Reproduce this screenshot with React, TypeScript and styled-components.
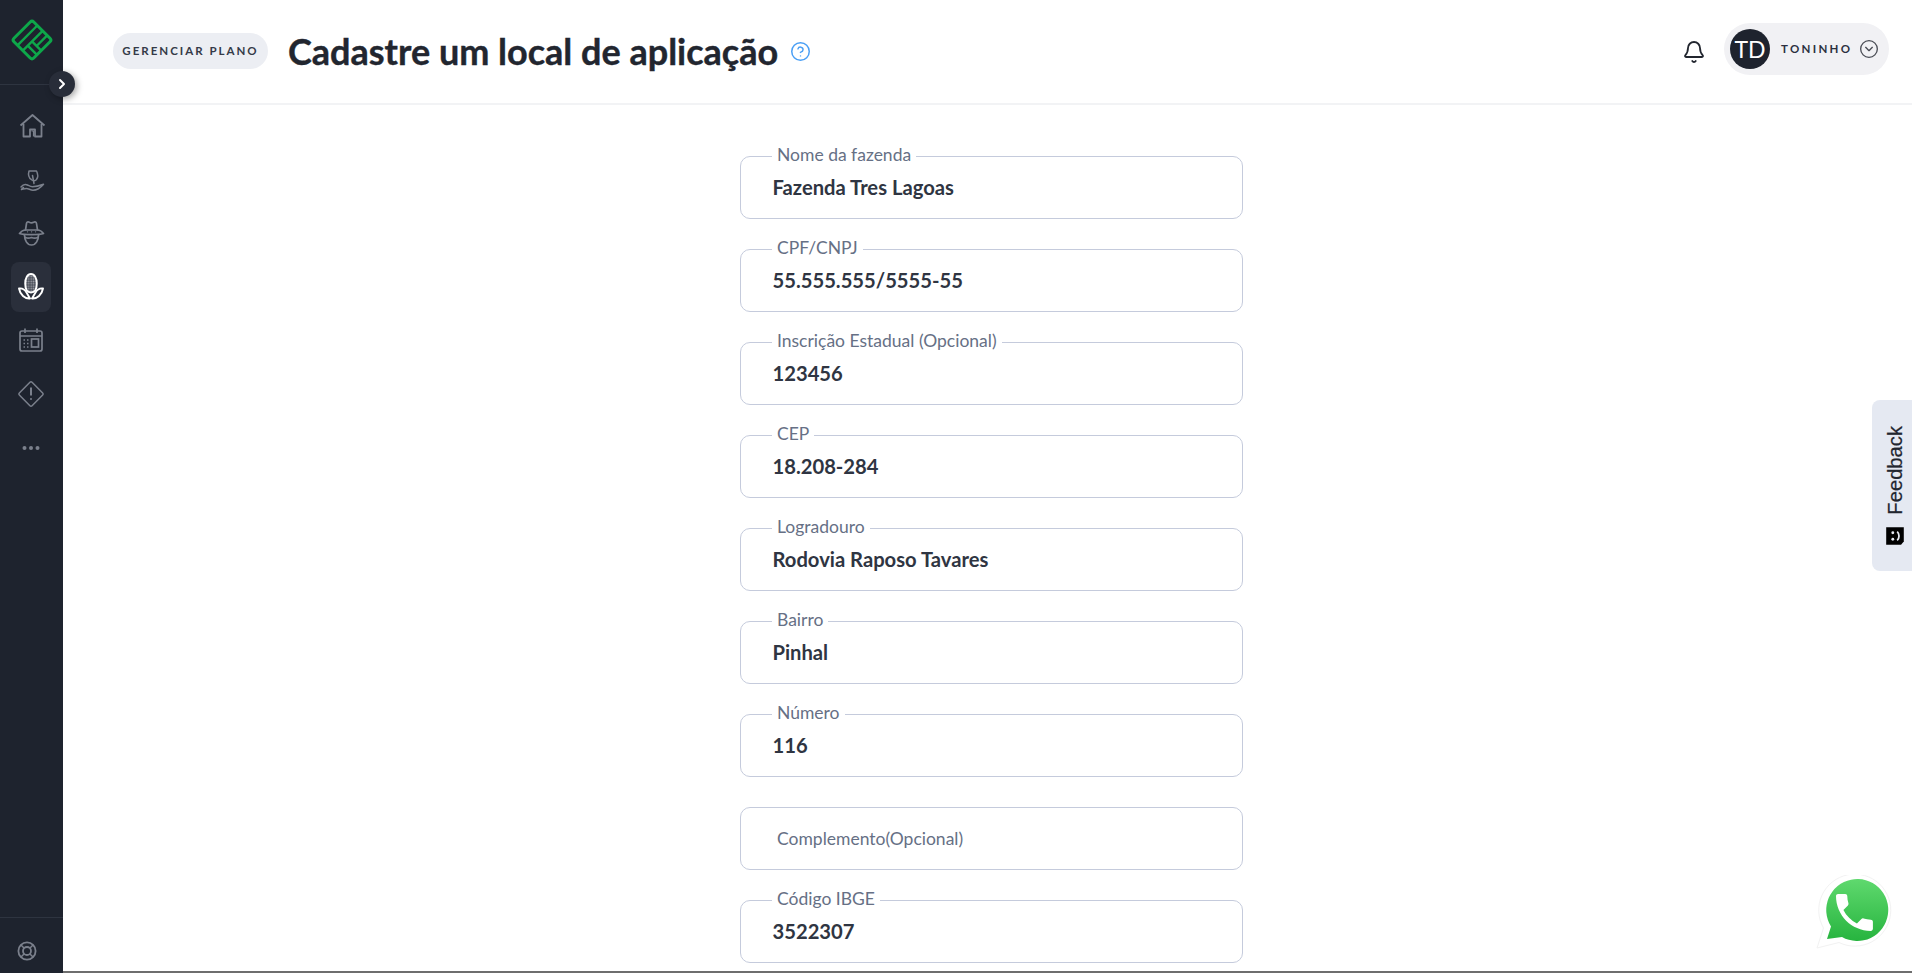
import React from 'react';
import styled, { createGlobalStyle } from 'styled-components';
import { Bell, ChevronRight, CircleChevronDown, CircleHelp } from 'lucide-react';

const Global = createGlobalStyle`
  html, body { margin: 0; padding: 0; height: 100%; overflow: hidden; background: #fff; }
  body { font-family: Lato, "Liberation Sans", sans-serif; }
`;

const Shell = styled.div`
  display: flex;
  width: 1912px;
  height: 973px;
  overflow: hidden;
  position: relative;
`;

const Sidebar = styled.aside`
  width: 63px;
  flex: none;
  background: #1e232e;
  display: flex;
  flex-direction: column;
  position: relative;
`;

const LogoArea = styled.div`
  height: 85px;
  flex: none;
  box-sizing: border-box;
  border-bottom: 1px solid #2e3440;
  padding: 19px 0 0 11px;
`;

const Toggle = styled.button`
  position: absolute;
  left: 49px;
  top: 71px;
  width: 26px;
  height: 26px;
  border: 0;
  padding: 0;
  border-radius: 50%;
  background: #282d39;
  color: #fff;
  display: flex;
  align-items: center;
  justify-content: center;
  box-shadow: 2px 2px 6px rgba(0, 0, 0, 0.35);
  z-index: 2;
`;

const Nav = styled.nav`
  display: flex;
  flex-direction: column;
  align-items: flex-start;
  gap: 3.6px;
  padding: 16px 0 0 11px;
`;

const NavItem = styled.div<{ $active?: boolean }>`
  width: 40px;
  height: 50px;
  border-radius: 8px;
  display: flex;
  align-items: center;
  justify-content: center;
  background: ${(p) => (p.$active ? '#2a2f3b' : 'transparent')};
  color: ${(p) => (p.$active ? '#ffffff' : '#7b808c')};
`;

const SideFoot = styled.div`
  margin-top: auto;
  height: 56px;
  box-sizing: border-box;
  border-top: 1px solid #2e3440;
  padding: 23px 0 0 17px;
  color: #7b808c;
`;

const Main = styled.main`
  flex: 1;
  min-width: 0;
  display: flex;
  flex-direction: column;
  border-bottom: 2px solid #6e6e6e;
  overflow: hidden;
`;

const Header = styled.header`
  height: 105px;
  flex: none;
  box-sizing: border-box;
  border-bottom: 2px solid #f2f3f5;
  display: flex;
  align-items: center;
  padding: 0 23px 0 50px;
`;

const PlanBadge = styled.div`
  width: 155px;
  height: 36px;
  border-radius: 18px;
  background: #eceef3;
  color: #343a48;
  font-size: 11.5px;
  font-weight: 700;
  letter-spacing: 2px;
  display: flex;
  align-items: center;
  justify-content: center;
  margin: 0 20px 2px 0;
  white-space: nowrap;
`;

const Title = styled.h1`
  margin: 0 12px 2px 0;
  font-size: 36px;
  font-weight: 700;
  -webkit-text-stroke: 0.4px #22262f;
  color: #22262f;
  white-space: nowrap;
`;

const Help = styled.span`
  display: flex;
  color: #4a9ff5;
`;

const HeaderRight = styled.div`
  margin-left: auto;
  display: flex;
  align-items: center;
  gap: 18px;
`;

const BellButton = styled.span`
  display: flex;
  color: #22262f;
`;

const UserPill = styled.div`
  width: 165px;
  height: 52px;
  box-sizing: border-box;
  border-radius: 26px;
  background: #f1f1f4;
  padding: 0 10px 0 6px;
  margin-bottom: 6px;
  display: flex;
  align-items: center;
`;

const Avatar = styled.div`
  width: 40px;
  height: 40px;
  border-radius: 50%;
  background: #1e232e;
  color: #fff;
  font-size: 23px;
  display: flex;
  align-items: center;
  justify-content: center;
  margin-right: 11px;
`;

const UserName = styled.span`
  font-size: 11.5px;
  font-weight: 700;
  letter-spacing: 2.3px;
  color: #2b3040;
  margin-right: auto;
`;

const Chevron = styled.span`
  display: flex;
  color: #4a4d55;
`;

const Content = styled.div`
  flex: 1;
  min-height: 0;
  padding: 51px 0 0 8px;
  display: flex;
  justify-content: center;
`;

const Form = styled.div`
  width: 503px;
  display: flex;
  flex-direction: column;
  gap: 30px;
`;

const Field = styled.div`
  position: relative;
  height: 63px;
  flex: none;
  box-sizing: border-box;
  border: 1.5px solid #c5cbdc;
  border-radius: 10px;
  padding: 0 0 2px 31.5px;
  display: flex;
  align-items: center;
`;

const FieldLabel = styled.label`
  position: absolute;
  left: 31px;
  top: -13px;
  padding: 0 5px;
  background: #fff;
  font-size: 17.5px;
  line-height: 21px;
  color: #667085;
  white-space: nowrap;
`;

const FieldValue = styled.span`
  font-size: 20.2px;
  font-weight: 700;
  color: #2f3542;
`;

const Placeholder = styled.span`
  font-size: 17.5px;
  color: #667085;
  padding: 2px 0 0 4.5px;
`;

const FeedbackTab = styled.div`
  position: absolute;
  right: 0;
  top: 400px;
  width: 40px;
  height: 171px;
  box-sizing: border-box;
  border-radius: 8px 0 0 8px;
  background: #e5e9f2;
  display: flex;
  flex-direction: column;
  align-items: center;
  justify-content: flex-end;
  gap: 10px;
  padding: 0 0 24px 6px;
`;

const FeedbackText = styled.span`
  writing-mode: vertical-rl;
  transform: rotate(180deg);
  font-family: "Liberation Sans", Arial, sans-serif;
  font-size: 20.2px;
  color: #22262f;
  -webkit-text-stroke: 0.2px #22262f;
`;

const WhatsApp = styled.a`
  position: absolute;
  left: 1814px;
  top: 875px;
  display: flex;
`;

const LogoMark = () => (
  <svg width="42" height="42" viewBox="-21 -21 42 42" fill="none" stroke="#0ea74a" strokeWidth="3" strokeLinejoin="round">
    <g transform="rotate(-45)">
      <rect x="-14" y="-14" width="28" height="28" rx="2.5" />
      <path d="M-14 -6.500H14M-14 1H14M-7 1V14M-1 1V14M-1 7.500H14" strokeWidth="2.400" />
    </g>
  </svg>
);

const HomeIcon = () => (
  <svg width="26" height="24" viewBox="-1.5 0 26 24" overflow="visible" fill="none" stroke="currentColor" strokeWidth="1.8" strokeLinejoin="round">
    <path d="M1 11.500 13 1l12 10.500" />
    <path d="M4 10v12.500h6.500V15.500h5v7H22V10" />
    <path d="M12 17h2v5.500" strokeWidth="1.200" />
  </svg>
);

const HandIcon = () => (
  <svg width="26" height="26" viewBox="-1 -2 26 26" overflow="visible" fill="none" stroke="currentColor" strokeWidth="1.5" strokeLinecap="round" strokeLinejoin="round">
    <path d="M10 2h7.500c1.500 3 1.500 6.500 0 8.500-1.200 1.500-3.500 1.500-5 .2C10 9 9 5.500 10 2Z" />
    <path d="M13.500 6.500 15 14.500" />
    <path d="M2 18c2-2.500 4.500-3 6.500-2 2 1 3 1.700 5 1.700 3 0 7-1 11-2.500-2.500 3-7 6-10.500 6-2.500 0-4.500-1.700-6.500-1.700s-3 .5-5 1c.5-.8 1-1.500 2-2" />
  </svg>
);

const FarmerIcon = () => (
  <svg width="26" height="26" viewBox="-0.5 0 26 26" overflow="visible" fill="none" stroke="currentColor" strokeWidth="1.7" strokeLinecap="round" strokeLinejoin="round">
    <path d="M7 10 8 3.500c.2-1.500 1.500-2 2.800-1.300 1.500.8 3 .8 4.400 0 1.300-.7 2.600-.2 2.800 1.300L19 10" />
    <path d="M1 13.500c1.500-2 3.500-3.500 6-3.500h12c2.500 0 4.500 1.500 6 3.500-4 1.500-20 1.500-24 0Z" />
    <path d="M6 15c0 5 2.500 10 7 10s7-5 7-10" />
    <path d="M9 11.800h.1M13 11.800h.1M17 11.800h.1" strokeWidth="1.300" />
    <path d="M7 17.500c2 1 3.500 1 6 0 2.500 1 4 1 6 0" />
  </svg>
);

const CornIcon = () => (
  <svg width="26" height="27" viewBox="0 0 26 27">
    <defs>
      <pattern id="kernels" width="2.400" height="2.400" patternUnits="userSpaceOnUse">
        <rect width="2.400" height="2.400" fill="#4a4e59" />
        <circle cx="1.200" cy="1.200" r="0.800" fill="#a4a7ae" />
      </pattern>
    </defs>
    <path d="M13 1c3.500 0 5.800 4 5.800 9.500 0 5.500-2 9-5.800 9s-5.800-3.500-5.800-9C7.200 5 9.500 1 13 1Z" fill="url(#kernels)" stroke="#fff" strokeWidth="1.900" />
    <path d="M1 15.500c3.500-.5 6 1.300 7.500 4l3.500 6c-5 .5-10-4-11-10ZM25 15.500c-3.500-.5-6 1.300-7.500 4l-3.500 6c5 .5 10-4 11-10Z" fill="#2a2f3b" stroke="#fff" strokeWidth="1.900" strokeLinejoin="round" />
  </svg>
);

const CalendarIcon = () => (
  <svg width="24" height="24" viewBox="0 0 24 24" fill="none" stroke="currentColor" strokeWidth="1.7">
    <rect x="1" y="3" width="22" height="20" rx="2" />
    <path d="M1 8h22M6 0.500V5M18 0.500V5" />
    <rect x="12.500" y="11" width="7" height="8" />
    <path d="M4.500 12h1.500M8 12h1.500M4.500 15.500h1.500M8 15.500h1.500M4.500 19h1.500M8 19h1.500" />
  </svg>
);

const AlertIcon = () => (
  <svg width="28" height="28" viewBox="0 0 28 28" fill="none" stroke="currentColor" strokeWidth="1.5" strokeLinejoin="round">
    <rect x="5" y="5" width="18" height="18" rx="1.500" transform="rotate(45 14 14)" />
    <path d="M14 7.500v8" strokeWidth="2" />
    <circle cx="14" cy="19" r="1" fill="currentColor" stroke="none" />
  </svg>
);

const DotsIcon = () => (
  <svg width="18" height="6" viewBox="0 0 18 6" fill="currentColor">
    <circle cx="2.500" cy="3" r="2" />
    <circle cx="9" cy="3" r="2" />
    <circle cx="15.500" cy="3" r="2" />
  </svg>
);

const BuoyIcon = () => (
  <svg width="20" height="20" viewBox="0 0 20 20" fill="none" stroke="currentColor">
    <circle cx="10" cy="10" r="8.600" strokeWidth="1.800" />
    <circle cx="10" cy="10" r="4" strokeWidth="1.800" />
    <path d="M4 4l3 3M16 4l-3 3M4 16l3-3M16 16l-3-3" strokeWidth="1.500" />
  </svg>
);

const FeedbackGlyph = () => (
  <svg width="22" height="22" viewBox="0 0 20 20">
    <g transform="rotate(-90 10 10)">
      <path d="M2 2h16v16H5l-3-2.500Z" fill="#000" />
      <circle cx="7" cy="8" r="1.300" fill="#e5e9f2" />
      <circle cx="13" cy="8" r="1.300" fill="#e5e9f2" />
      <path d="M6 12c2 2.200 6 2.200 8 0" fill="none" stroke="#e5e9f2" strokeWidth="1.600" />
    </g>
  </svg>
);

const WhatsAppIcon = () => (
  <svg width="80" height="76" viewBox="0 0 80 76">
    <defs>
      <linearGradient id="wa" x1="0" y1="0" x2="0" y2="1">
        <stop offset="0" stopColor="#5fd96e" />
        <stop offset="1" stopColor="#27b43f" />
      </linearGradient>
    </defs>
    <path d="M3 73 9.500 53A36 36 0 1 1 25 67.500Z" fill="#fff" stroke="#f2f2f2" strokeWidth="1" />
    <path d="M13 64 17 51.500A31 31 0 1 1 28 62Z" fill="url(#wa)" />
    <g transform="translate(15.850 12.850) scale(2.050)">
      <path fill="#fff" d="M6.620 10.790c1.440 2.830 3.760 5.140 6.590 6.590l2.200-2.200c.27-.27.67-.36 1.020-.24 1.120.37 2.330.57 3.570.57.550 0 1 .45 1 1V20c0 .55-.45 1-1 1-9.390 0-17-7.610-17-17 0-.55.45-1 1-1h3.500c.55 0 1 .45 1 1 0 1.250.2 2.450.57 3.570.11.350.03.740-.25 1.020l-2.200 2.200z" />
    </g>
  </svg>
);

const fields: { label: string; value?: string }[] = [
  { label: 'Nome da fazenda', value: 'Fazenda Tres Lagoas' },
  { label: 'CPF/CNPJ', value: '55.555.555/5555-55' },
  { label: 'Inscrição Estadual (Opcional)', value: '123456' },
  { label: 'CEP', value: '18.208-284' },
  { label: 'Logradouro', value: 'Rodovia Raposo Tavares' },
  { label: 'Bairro', value: 'Pinhal' },
  { label: 'Número', value: '116' },
  { label: 'Complemento(Opcional)' },
  { label: 'Código IBGE', value: '3522307' },
];

export default function App() {
  return (
    <>
      <Global />
      <Shell>
        <Sidebar>
          <LogoArea><LogoMark /></LogoArea>
          <Toggle aria-label="Expandir"><ChevronRight size={16} strokeWidth={3} /></Toggle>
          <Nav>
            <NavItem><HomeIcon /></NavItem>
            <NavItem><HandIcon /></NavItem>
            <NavItem><FarmerIcon /></NavItem>
            <NavItem $active><CornIcon /></NavItem>
            <NavItem><CalendarIcon /></NavItem>
            <NavItem><AlertIcon /></NavItem>
            <NavItem><DotsIcon /></NavItem>
          </Nav>
          <SideFoot><BuoyIcon /></SideFoot>
        </Sidebar>
        <Main>
          <Header>
            <PlanBadge>GERENCIAR PLANO</PlanBadge>
            <Title>Cadastre um local de aplicação</Title>
            <Help><CircleHelp size={21} strokeWidth={1.7} /></Help>
            <HeaderRight>
              <BellButton><Bell size={24} strokeWidth={1.8} /></BellButton>
              <UserPill>
                <Avatar>TD</Avatar>
                <UserName>TONINHO</UserName>
                <Chevron><CircleChevronDown size={20} strokeWidth={1.6} /></Chevron>
              </UserPill>
            </HeaderRight>
          </Header>
          <Content>
            <Form>
              {fields.map((f) => (
                <Field key={f.label}>
                  {f.value ? (
                    <>
                      <FieldLabel>{f.label}</FieldLabel>
                      <FieldValue>{f.value}</FieldValue>
                    </>
                  ) : (
                    <Placeholder>{f.label}</Placeholder>
                  )}
                </Field>
              ))}
            </Form>
          </Content>
        </Main>
        <FeedbackTab>
          <FeedbackText>Feedback</FeedbackText>
          <FeedbackGlyph />
        </FeedbackTab>
        <WhatsApp aria-label="WhatsApp"><WhatsAppIcon /></WhatsApp>
      </Shell>
    </>
  );
}
